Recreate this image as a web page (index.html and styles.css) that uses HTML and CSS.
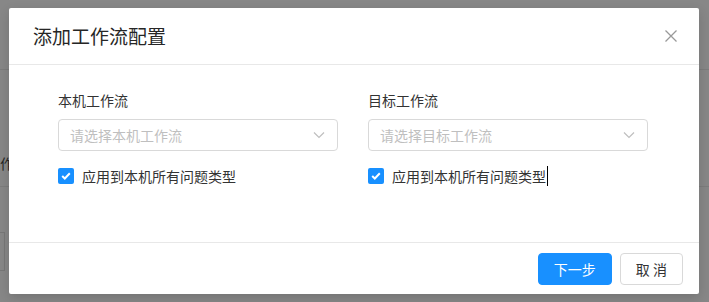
FILE: index.html
```html
<!DOCTYPE html>
<html lang="zh-CN">

<head>
    <meta charset="UTF-8">
    <meta name="viewport" content="width=device-width, initial-scale=1.0">
    <title>添加工作流配置</title>
    <link rel="stylesheet" href="styles.css">
</head>

<body>
    <div class="backdrop">
        <div class="bg-line bg-line-top"></div>
        <div class="bg-text">工作</div>
        <div class="bg-line bg-line-mid"></div>
        <div class="bg-box"></div>
    </div>

    <div class="modal">
        <div class="modal-header">
            <h2 class="modal-title">添加工作流配置</h2>
            <button class="modal-close" aria-label="关闭">
                <svg width="14" height="14" viewBox="0 0 14 14">
                    <path d="M1.5 1.5 L12.5 12.5 M12.5 1.5 L1.5 12.5" stroke="#999" stroke-width="1.3" fill="none"/>
                </svg>
            </button>
        </div>

        <div class="modal-body">
            <div class="field">
                <label class="field-label">本机工作流</label>
                <div class="select">
                    <span class="placeholder">请选择本机工作流</span>
                    <svg class="arrow" width="12" height="8" viewBox="0 0 12 8">
                        <path d="M1 1.5 L6 6.5 L11 1.5" stroke="#bfbfbf" stroke-width="1.2" fill="none"/>
                    </svg>
                </div>
                <label class="check">
                    <span class="check-box">
                        <svg width="10" height="8" viewBox="0 0 10 8">
                            <path d="M1.2 4 L3.8 6.5 L8.8 1.3" stroke="#fff" stroke-width="2" fill="none"/>
                        </svg>
                    </span>
                    应用到本机所有问题类型
                </label>
            </div>

            <div class="field">
                <label class="field-label">目标工作流</label>
                <div class="select">
                    <span class="placeholder">请选择目标工作流</span>
                    <svg class="arrow" width="12" height="8" viewBox="0 0 12 8">
                        <path d="M1 1.5 L6 6.5 L11 1.5" stroke="#bfbfbf" stroke-width="1.2" fill="none"/>
                    </svg>
                </div>
                <label class="check">
                    <span class="check-box">
                        <svg width="10" height="8" viewBox="0 0 10 8">
                            <path d="M1.2 4 L3.8 6.5 L8.8 1.3" stroke="#fff" stroke-width="2" fill="none"/>
                        </svg>
                    </span>
                    应用到本机所有问题类型<span class="caret"></span>
                </label>
            </div>
        </div>

        <div class="modal-footer">
            <button class="btn btn-primary">下一步</button>
            <button class="btn">取 消</button>
        </div>
    </div>
</body>
</html>
```

FILE: styles.css
```css
body {
    margin: 0;
    height: 302px;
    overflow: hidden;
    background-color: #878787;
    font-family: "Noto Sans CJK SC", "Noto Sans", sans-serif;
    font-size: 14px;
    color: #333;
    position: relative;
    padding-top: 8px;
    box-sizing: border-box;
}

/* page content under the mask */
.backdrop {
    position: absolute;
    inset: 0;
}

.bg-line {
    position: absolute;
    left: 0;
    right: 0;
    height: 1px;
    background: #7c7c7c;
}

.bg-line-top {
    top: 69px;
}

.bg-line-mid {
    top: 186px;
}

.bg-text {
    position: absolute;
    left: -14px;
    top: 153px;
    font-size: 14px;
    color: #262626;
}

.bg-box {
    position: absolute;
    left: -20px;
    top: 232px;
    width: 23px;
    height: 37px;
    border: 1px solid #777;
}

.modal {
    position: relative;
    width: 690px;
    margin-left: 9px;
    background: #fff;
    border-radius: 2px;
    box-shadow: 0 4px 12px rgba(0, 0, 0, 0.15);
}

.modal-header {
    display: flex;
    align-items: center;
    justify-content: space-between;
    height: 56px;
    padding: 0 21px 0 24px;
    border-bottom: 1px solid #e8e8e8;
}

.modal-title {
    margin: 0;
    font-size: 19px;
    font-weight: normal;
    line-height: 24px;
    color: #262626;
}

.modal-close {
    border: none;
    background: none;
    padding: 0;
    width: 14px;
    height: 14px;
    cursor: pointer;
}

.modal-body {
    display: grid;
    grid-template-columns: 280px 280px;
    column-gap: 30px;
    align-content: start;
    padding: 24px 0 0 49px;
    height: 178px;
    box-sizing: border-box;
    border-bottom: 1px solid #e8e8e8;
}

.field-label {
    display: block;
    line-height: 22px;
    margin-bottom: 8px;
    color: #333;
}

.select {
    display: flex;
    align-items: center;
    justify-content: space-between;
    height: 32px;
    box-sizing: border-box;
    border: 1px solid #d9d9d9;
    border-radius: 4px;
    padding: 0 12px 0 11px;
}

.placeholder {
    color: #bfbfbf;
}

.check {
    display: flex;
    align-items: center;
    margin-top: 14px;
    line-height: 22px;
    color: #333;
}

.check-box {
    display: flex;
    align-items: center;
    justify-content: center;
    width: 16px;
    height: 16px;
    margin-right: 8px;
    border-radius: 2px;
    background: #1890ff;
}

.caret {
    display: inline-block;
    width: 1px;
    height: 20px;
    margin-left: 1px;
    background: #000;
}

.modal-footer {
    display: flex;
    justify-content: flex-end;
    gap: 8px;
    padding: 10px 16px 9px;
}

.btn {
    height: 32px;
    padding: 0 15px;
    border: 1px solid #d9d9d9;
    border-radius: 4px;
    background: #fff;
    color: #333;
    font-family: inherit;
    font-size: 14px;
    cursor: pointer;
}

.btn-primary {
    background: #1890ff;
    border-color: #1890ff;
    color: #fff;
}
```
